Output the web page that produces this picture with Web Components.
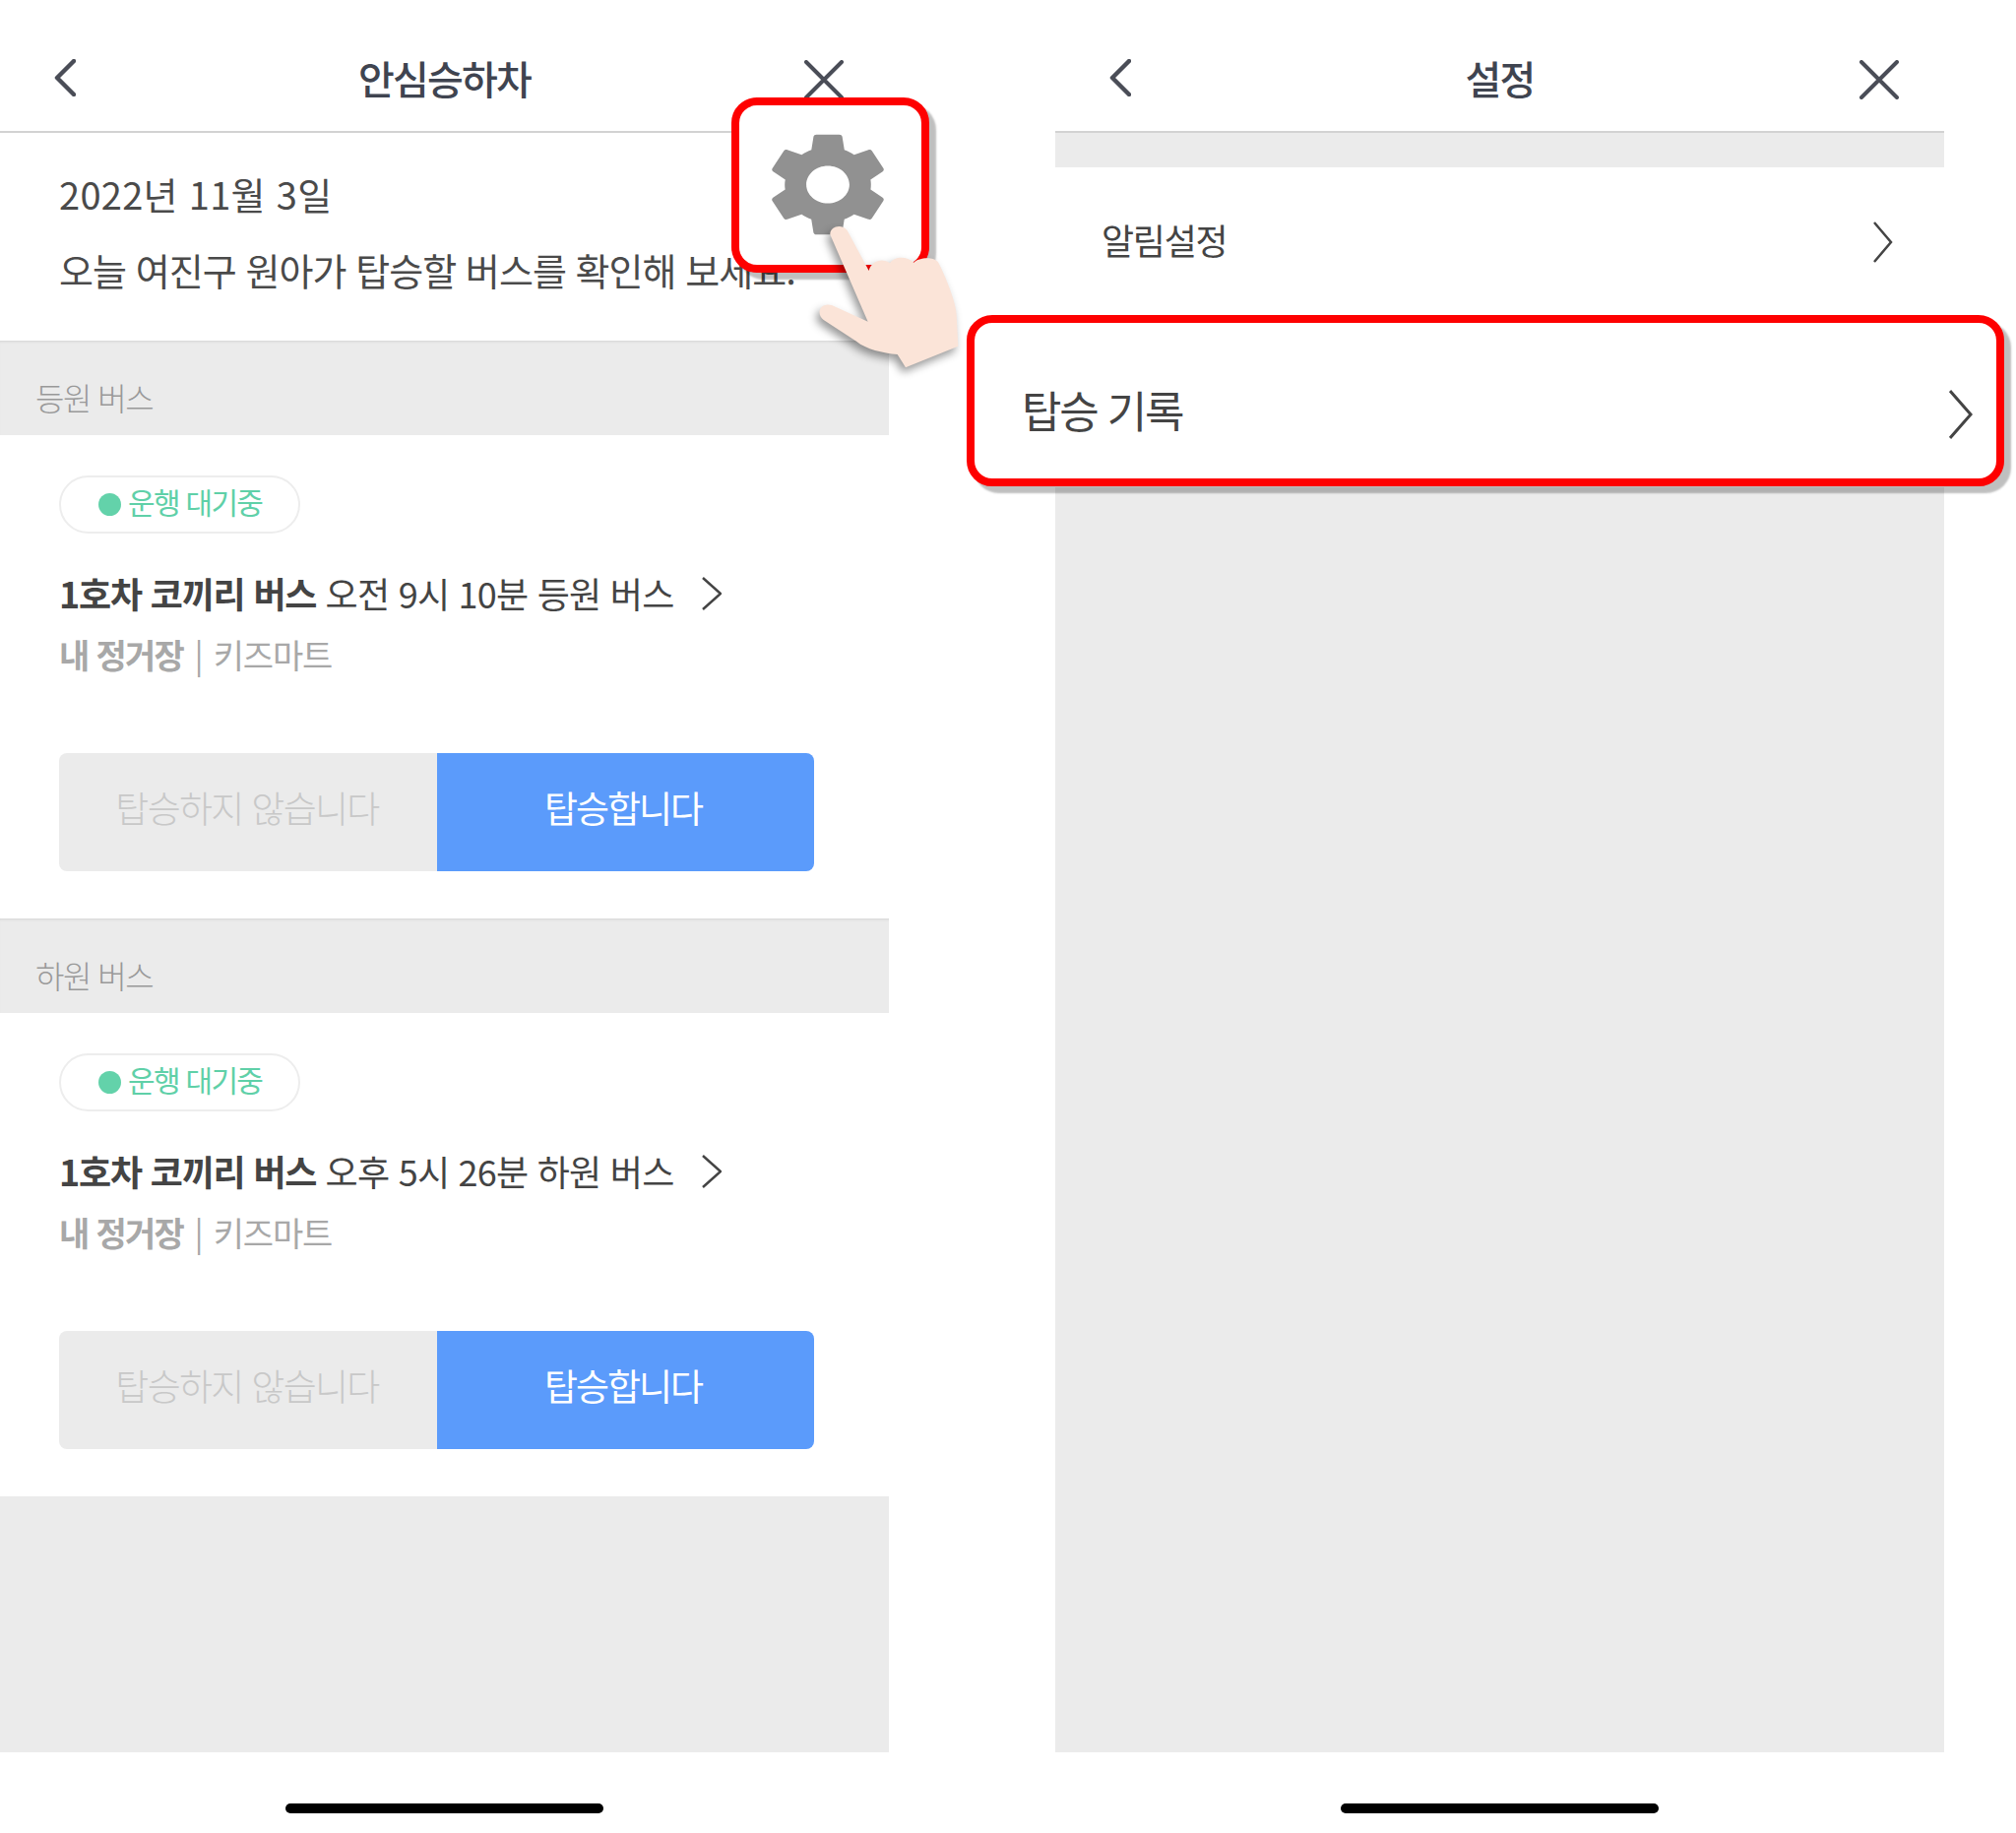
<!DOCTYPE html>
<html lang="ko">
<head>
<meta charset="utf-8">
<title>안심승하차</title>
<style>
	html, body {
		margin: 0;
		background: #fff;
		font-family: "Noto Sans CJK KR", "Noto Sans", sans-serif;
		color: #444;
	}
	main {
		position: relative;
		display: flex;
		gap: 169px;
		width: 2048px;
		height: 1862px;
		overflow: hidden;
	}
</style>
</head>
<body>
<main>
	<phone-panel heading="안심승하차">
		<intro-block>
			<span>2022년 11월 3일</span>
			<span>오늘 여진구 원아가 탑승할 버스를 확인해 보세요.</span>
		</intro-block>
		<section-band>등원 버스</section-band>
		<bus-card time="오전 9시 10분 등원 버스"></bus-card>
		<section-band>하원 버스</section-band>
		<bus-card time="오후 5시 26분 하원 버스"></bus-card>
	</phone-panel>

	<phone-panel heading="설정">
		<settings-list>
			<settings-row>알림설정</settings-row>
		</settings-list>
	</phone-panel>

	<callout-box id="gear_callout">
		<gear-icon></gear-icon>
	</callout-box>
	<callout-box id="history_callout">
		<history-row>탑승 기록</history-row>
	</callout-box>
	<tap-hand></tap-hand>
</main>

<template id="phone_template">
	<style>
		:host {
			display: flex;
			flex-direction: column;
			width: 903px;
			height: 1862px;
			flex: none;
		}
		header {
			display: grid;
			grid-template-columns: 1fr auto 1fr;
			align-items: center;
			height: 108px;
			padding: 25px 46px 0;
			border-bottom: 2px solid #d2d2d2;
		}
		h1 {
			margin: 0;
			font-size: 40px;
			font-weight: 500;
			letter-spacing: -1.8px;
			color: #3f4450;
			line-height: 56px;
		}
		.back { margin-left: 9px; }
		.close { justify-self: end; margin-top: 3px; }
		.body {
			flex: 1;
			display: flex;
			flex-direction: column;
			background: #ebebeb;
		}
		.foot {
			height: 82px;
			display: flex;
			justify-content: center;
			padding-top: 52px;
			box-sizing: border-box;
			background: #fff;
		}
		.foot i {
			width: 323px;
			height: 10px;
			border-radius: 5px;
			background: #000;
		}
	</style>
	<header>
		<svg class="back" width="22" height="38" viewBox="0 0 22 38"><path d="M20 2 L3 19 L20 36" fill="none" stroke="#4a4d57" stroke-width="4.5" stroke-linecap="round" stroke-linejoin="round"/></svg>
		<h1></h1>
		<svg class="close" width="40" height="40" viewBox="0 0 40 40"><path d="M2 2 L38 38 M38 2 L2 38" fill="none" stroke="#4a4d57" stroke-width="4" stroke-linecap="round"/></svg>
	</header>
	<div class="body"><slot></slot></div>
	<div class="foot"><i></i></div>
</template>

<template id="intro_template">
	<style>
		:host {
			display: flex;
			flex-direction: column;
			height: 211px;
			padding: 23px 0 0 60px;
			box-sizing: border-box;
			background: #fff;
			font-size: 38px;
			line-height: 77px;
			color: #4a4a4a;
		}
		::slotted(span:first-child) { letter-spacing: 0.3px; }
		::slotted(span:last-child) { letter-spacing: -0.95px; white-space: nowrap; }
	</style>
	<slot></slot>
</template>

<template id="band_template">
	<style>
		:host {
			display: block;
			height: 96px;
			padding: 34px 0 0 36px;
			box-sizing: border-box;
			background: #ebebeb;
			box-shadow: inset 0 3px 3px -2px rgba(0,0,0,.1);
			font-size: 32px;
			font-weight: 300;
			line-height: 46px;
			letter-spacing: -1.5px;
			color: #999;
		}
	</style>
	<slot></slot>
</template>

<template id="bus_template">
	<style>
		:host {
			display: block;
			height: 491px;
			padding: 41px 76px 0 60px;
			box-sizing: border-box;
			background: #fff;
		}
		.pill {
			display: flex;
			align-items: center;
			gap: 7px;
			width: 245px;
			height: 59px;
			padding-left: 38px;
			box-sizing: border-box;
			border: 2px solid #ededed;
			border-radius: 30px;
			font-size: 30px;
			letter-spacing: -1.7px;
			color: #5fd0a8;
		}
		.pill span { margin-bottom: 8px; }
		.pill i {
			width: 23px;
			height: 23px;
			border-radius: 50%;
			background: #63d2aa;
		}
		.route {
			display: flex;
			align-items: center;
			gap: 28px;
			height: 60px;
			margin-top: 30px;
			font-size: 36px;
			letter-spacing: -0.75px;
			color: #444;
			white-space: nowrap;
		}
		.route b { font-weight: 700; letter-spacing: -1.2px; }
		.route svg { margin-top: 2px; }
		.stop {
			height: 66px;
			line-height: 66px;
			font-size: 34px;
			letter-spacing: -1.2px;
			word-spacing: 3px;
			color: #a8a8a8;
		}
		.stop b { font-weight: 700; letter-spacing: -1.7px; word-spacing: 0; }
		.buttons {
			display: grid;
			grid-template-columns: 384px 383px;
			height: 120px;
			margin-top: 67px;
			border-radius: 8px;
			overflow: hidden;
			font-size: 37px;
			letter-spacing: -2px;
			text-align: center;
			line-height: 110px;
		}
		.no { background: #ebebeb; color: #c8c8c8; font-weight: 300; letter-spacing: -1.7px; padding-right: 2px; }
		.yes { background: #5b9bfb; color: #fff; padding-right: 5px; }
	</style>
	<div class="pill"><i></i><span>운행 대기중</span></div>
	<div class="route"><span><b>1호차 코끼리 버스</b> <span id="time"></span></span>
		<svg width="20" height="34" viewBox="0 0 20 34"><path d="M1 1 L19 17 L1 33" fill="none" stroke="#444" stroke-width="2.5"/></svg>
	</div>
	<div class="stop"><b>내 정거장</b> | 키즈마트</div>
	<div class="buttons">
		<div class="no">탑승하지 않습니다</div>
		<div class="yes">탑승합니다</div>
	</div>
</template>

<template id="list_template">
	<style>
		:host {
			display: flex;
			flex-direction: column;
			margin-top: 35px;
			height: 325px;
			background: #fff;
		}
	</style>
	<slot></slot>
</template>

<template id="row_template">
	<style>
		:host {
			display: flex;
			align-items: center;
			justify-content: space-between;
			height: 152px;
			padding: 0 52px 0 47px;
			font-size: 36px;
			letter-spacing: -1.3px;
			color: #444;
		}
		span { margin-bottom: 6px; }
	</style>
	<span><slot></slot></span>
	<svg width="20" height="42" viewBox="0 0 20 42"><path d="M1 1 L18 21 L1 41" fill="none" stroke="#444" stroke-width="2.5"/></svg>
</template>

<template id="history_template">
	<style>
		:host {
			display: flex;
			align-items: center;
			justify-content: space-between;
			height: 100%;
			padding: 18px 24px 0 48px;
			box-sizing: border-box;
			font-size: 44px;
			letter-spacing: -2.2px;
			color: #444;
		}
		svg { margin-top: 10px; }
	</style>
	<span><slot></slot></span>
	<svg width="24" height="50" viewBox="0 0 24 50"><path d="M1 1 L22 25 L1 49" fill="none" stroke="#444" stroke-width="3"/></svg>
</template>

<template id="callout_template">
	<style>
		/* red highlight frames sit on top of the two phones */
		:host {
			position: absolute;
			box-sizing: border-box;
			border: 8px solid #fe0000;
			border-radius: 26px;
			background: #fff;
			box-shadow: 7px 7px 2px rgba(0,0,0,.25);
		}
	</style>
	<slot></slot>
</template>

<template id="gear_template">
	<style>
		:host { display: block; height: 100%; }
		svg { display: block; margin: 17px 0 0 17px; }
	</style>
	<svg width="146" height="127" viewBox="0 0 24 24" preserveAspectRatio="none"><path fill="#919191" d="M19.14 12.94c.04-.3.06-.61.06-.94 0-.32-.02-.64-.07-.94l2.03-1.58c.18-.14.23-.41.12-.61l-1.92-3.32c-.12-.22-.37-.29-.59-.22l-2.39.96c-.5-.38-1.03-.7-1.62-.94l-.36-2.54c-.04-.24-.24-.41-.48-.41h-3.84c-.24 0-.43.17-.47.41l-.36 2.54c-.59.24-1.13.57-1.62.94l-2.39-.96c-.22-.08-.47 0-.59.22L2.74 8.87c-.12.21-.08.47.12.61l2.03 1.58c-.05.3-.09.63-.09.94s.02.64.07.94l-2.03 1.58c-.18.14-.23.41-.12.61l1.92 3.32c.12.22.37.29.59.22l2.39-.96c.5.38 1.03.7 1.62.94l.36 2.54c.05.24.24.41.48.41h3.84c.24 0 .44-.17.47-.41l.36-2.54c.59-.24 1.13-.56 1.62-.94l2.39.96c.22.08.47 0 .59-.22l1.92-3.32c.12-.22.07-.47-.12-.61l-2.01-1.58zM12 15.6c-1.98 0-3.6-1.62-3.6-3.6s1.62-3.6 3.6-3.6 3.6 1.62 3.6 3.6-1.62 3.6-3.6 3.6z"/></svg>
</template>

<template id="hand_template">
	<style>
		:host {
			position: absolute;
			left: 700px;
			top: 30px;
			width: 320px;
			height: 370px;
		}
		svg {
			display: block;
			filter: drop-shadow(-3px 5px 4px rgba(0,0,0,.4));
		}
	</style>
	<svg width="320" height="370" viewBox="0 0 960 1110"><path fill="#fbe4d8" d="M430 625 C428 600 465 590 482 612 L548 735 C555 705 590 695 612 712 C625 690 665 690 685 710 C700 695 745 690 760 710 C790 770 815 840 815 870 L820 965 L660 1030 L635 990 C590 985 540 975 510 950 L410 885 C385 865 400 830 435 840 L545 890 Z"/></svg>
</template>

<script>
	/**
	 * Makes an element class that clones one template into an open shadow root.
	 * @param {string} id Template id.
	 * @returns {typeof HTMLElement}
	 */
	const fromTemplate = (id) => class extends HTMLElement {
		constructor() {
			super()
			let shadowRoot = this.attachShadow({ mode: 'open' })
			shadowRoot.appendChild(document.getElementById(id).content.cloneNode(true))
		}
	}

	class PhonePanel extends fromTemplate('phone_template') {
		connectedCallback() {
			this.shadowRoot.querySelector('h1').textContent = this.getAttribute('heading')
		}
	}

	class BusCard extends fromTemplate('bus_template') {
		connectedCallback() {
			this.shadowRoot.getElementById('time').textContent = this.getAttribute('time')
		}
	}

	customElements.define('phone-panel', PhonePanel)
	customElements.define('bus-card', BusCard)
	customElements.define('intro-block', fromTemplate('intro_template'))
	customElements.define('section-band', fromTemplate('band_template'))
	customElements.define('settings-list', fromTemplate('list_template'))
	customElements.define('settings-row', fromTemplate('row_template'))
	customElements.define('history-row', fromTemplate('history_template'))
	customElements.define('callout-box', fromTemplate('callout_template'))
	customElements.define('gear-icon', fromTemplate('gear_template'))
	customElements.define('tap-hand', fromTemplate('hand_template'))

	// the two highlights are placed on the free canvas above the phones
	const place = (id, left, top, width, height) => {
		Object.assign(document.getElementById(id).style, {
			left: left + 'px', top: top + 'px', width: width + 'px', height: height + 'px'
		})
	}
	place('gear_callout', 743, 99, 201, 178)
	place('history_callout', 982, 320, 1054, 174)
</script>
</body>
</html>
